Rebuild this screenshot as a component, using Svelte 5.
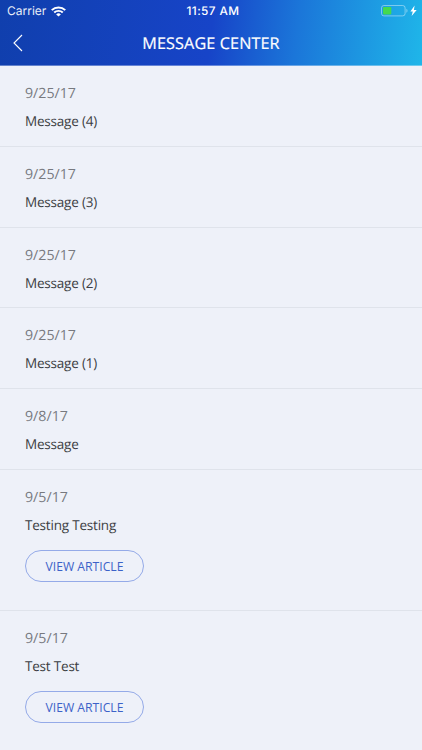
<script>
  const messages = [
    { date: '9/25/17', title: 'Message (4)' },
    { date: '9/25/17', title: 'Message (3)' },
    { date: '9/25/17', title: 'Message (2)' },
    { date: '9/25/17', title: 'Message (1)' },
    { date: '9/8/17', title: 'Message' },
    { date: '9/5/17', title: 'Testing Testing', article: true },
    { date: '9/5/17', title: 'Test Test', article: true }
  ];
</script>

<div class="screen">
  <header>
    <div class="status">
      <div class="left">
        <span class="carrier">Carrier</span>
        <svg class="wifi" width="15" height="11" viewBox="0 0 14 11" preserveAspectRatio="none" fill="none" stroke="#fff" stroke-width="1.9">
          <path d="M.7 4.1a9 9 0 0 1 12.6 0" />
          <path d="M3 6.5a5.7 5.7 0 0 1 8 0" />
          <path d="M7 10.6 4.8 8.4a3.1 3.1 0 0 1 4.4 0Z" fill="#fff" stroke="none" />
        </svg>
      </div>
      <span class="time">11:57 AM</span>
      <div class="right">
        <svg width="36" height="12" viewBox="0 0 36 12">
          <rect x=".5" y=".5" width="23.6" height="10.4" rx="2.4" fill="none" stroke="#fff" stroke-opacity=".42" />
          <rect x="2" y="2" width="8.3" height="7.4" rx=".8" fill="#44d94f" />
          <path d="M25.4 3.7c1.5.5 1.5 3.5 0 4Z" fill="#fff" fill-opacity=".45" />
          <path d="M33.6.4 29.4 6.4h2.4L30.6 11 35.7 4.9h-2.8Z" fill="#fff" />
        </svg>
      </div>
    </div>
    <nav>
      <button class="back" aria-label="Back">
        <svg width="10" height="18" viewBox="0 0 10 18" fill="none" stroke="#fff" stroke-width="1.1">
          <path d="M9 1 1 9l8 8" />
        </svg>
      </button>
      <h1>MESSAGE CENTER</h1>
    </nav>
  </header>

  <main>
    {#each messages as message}
      <article class:tall={message.article}>
        <time>{message.date}</time>
        <p>{message.title}</p>
        {#if message.article}
          <button class="view">VIEW ARTICLE</button>
        {/if}
      </article>
    {/each}
  </main>
</div>

<style>
  .screen {
    width: 422px;
    height: 750px;
    overflow: hidden;
    background: #eef1f9;
    font-family: 'Open Sans', 'Noto Sans', sans-serif;
    text-rendering: geometricPrecision;
  }
  header {
    box-sizing: border-box;
    height: 66px;
    border-bottom: 1px solid rgba(237, 241, 250, 0.38);
    background: linear-gradient(97deg, #103fad 0%, #1744c8 50%, #1b76d9 70%, #1fb6e9 100%) border-box;
    color: #fff;
  }
  .status {
    display: grid;
    grid-template-columns: 1fr auto 1fr;
    align-items: center;
    height: 21px;
    padding: 0 5px 0 7px;
    font-family: Inter, 'Liberation Sans', sans-serif;
    font-size: 11.8px;
    line-height: 22px;
  }
  .left {
    display: flex;
    align-items: center;
    gap: 5px;
  }
  .carrier {
    font-size: 12px;
    opacity: 0.9;
  }
  .time {
    padding-left: 2px;
    font-weight: 500;
    letter-spacing: 0.4px;
  }
  .right {
    display: flex;
    justify-content: flex-end;
  }
  nav {
    display: grid;
    grid-template-columns: 44px 1fr 44px;
    align-items: center;
    height: 44px;
  }
  button {
    margin: 0;
    font: inherit;
    background: none;
  }
  .back {
    display: flex;
    padding: 0 0 0 13px;
    border: 0;
  }
  h1 {
    margin: 0;
    font-size: 16.2px;
    font-weight: 500;
    line-height: 22px;
    letter-spacing: 0.12px;
    text-align: center;
    -webkit-text-stroke: 0.2px #fff;
  }
  article {
    box-sizing: border-box;
    height: 80.8px;
    padding: 17px 25px 0;
    border-bottom: 1px solid #dfe3eb;
  }
  article.tall {
    height: 140.8px;
  }
  time {
    display: block;
    padding-top: 1px;
    font-size: 14.2px;
    line-height: 20px;
    color: #77797f;
  }
  p {
    margin: 7px 0 0;
    font-size: 13.5px;
    line-height: 20px;
    letter-spacing: -0.2px;
    color: #3c3e43;
  }
  .view {
    display: block;
    box-sizing: border-box;
    width: 119px;
    height: 32px;
    margin-top: 15px;
    padding: 1px 0 0;
    border: 1px solid #94aae8;
    border-radius: 16px;
    font-size: 12.2px;
    line-height: 29px;
    color: #3c62c8;
    text-align: center;
  }
</style>
